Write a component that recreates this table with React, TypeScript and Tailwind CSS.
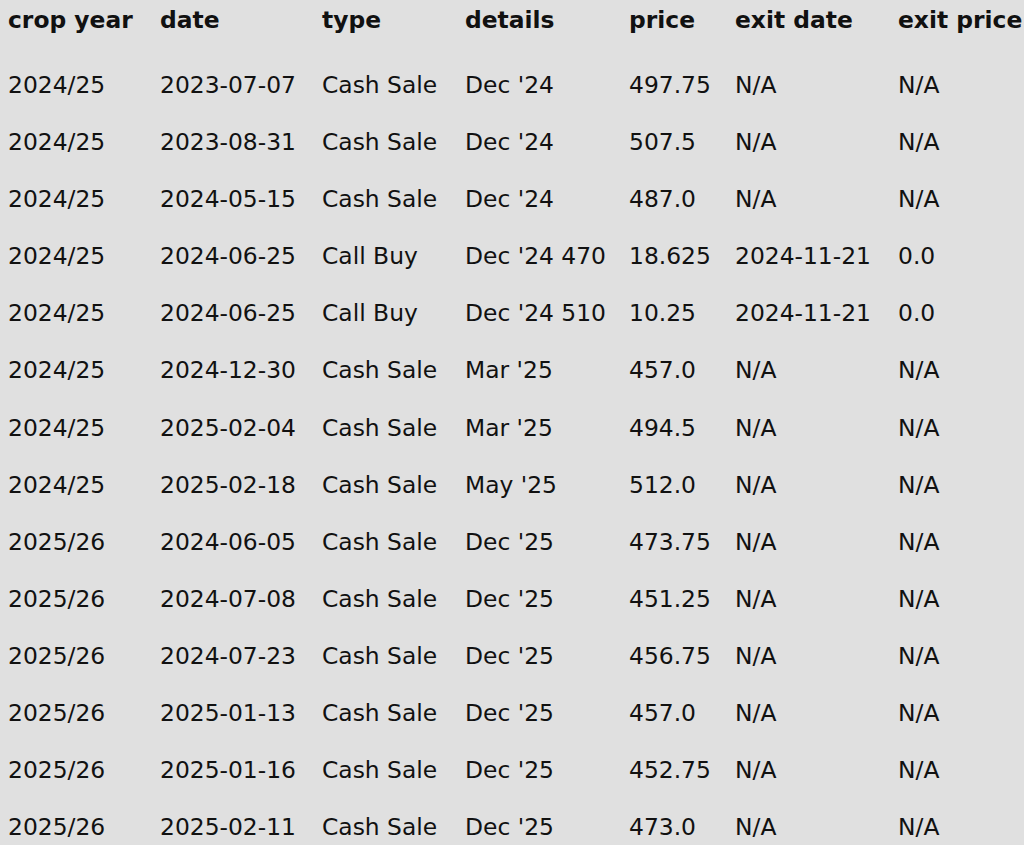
import React from "react";

type Trade = {
  cropYear: string;
  date: string;
  type: string;
  details: string;
  price: string;
  exitDate: string;
  exitPrice: string;
};

const trades: Trade[] = [
  { cropYear: "2024/25", date: "2023-07-07", type: "Cash Sale", details: "Dec '24", price: "497.75", exitDate: "N/A", exitPrice: "N/A" },
  { cropYear: "2024/25", date: "2023-08-31", type: "Cash Sale", details: "Dec '24", price: "507.5", exitDate: "N/A", exitPrice: "N/A" },
  { cropYear: "2024/25", date: "2024-05-15", type: "Cash Sale", details: "Dec '24", price: "487.0", exitDate: "N/A", exitPrice: "N/A" },
  { cropYear: "2024/25", date: "2024-06-25", type: "Call Buy", details: "Dec '24 470", price: "18.625", exitDate: "2024-11-21", exitPrice: "0.0" },
  { cropYear: "2024/25", date: "2024-06-25", type: "Call Buy", details: "Dec '24 510", price: "10.25", exitDate: "2024-11-21", exitPrice: "0.0" },
  { cropYear: "2024/25", date: "2024-12-30", type: "Cash Sale", details: "Mar '25", price: "457.0", exitDate: "N/A", exitPrice: "N/A" },
  { cropYear: "2024/25", date: "2025-02-04", type: "Cash Sale", details: "Mar '25", price: "494.5", exitDate: "N/A", exitPrice: "N/A" },
  { cropYear: "2024/25", date: "2025-02-18", type: "Cash Sale", details: "May '25", price: "512.0", exitDate: "N/A", exitPrice: "N/A" },
  { cropYear: "2025/26", date: "2024-06-05", type: "Cash Sale", details: "Dec '25", price: "473.75", exitDate: "N/A", exitPrice: "N/A" },
  { cropYear: "2025/26", date: "2024-07-08", type: "Cash Sale", details: "Dec '25", price: "451.25", exitDate: "N/A", exitPrice: "N/A" },
  { cropYear: "2025/26", date: "2024-07-23", type: "Cash Sale", details: "Dec '25", price: "456.75", exitDate: "N/A", exitPrice: "N/A" },
  { cropYear: "2025/26", date: "2025-01-13", type: "Cash Sale", details: "Dec '25", price: "457.0", exitDate: "N/A", exitPrice: "N/A" },
  { cropYear: "2025/26", date: "2025-01-16", type: "Cash Sale", details: "Dec '25", price: "452.75", exitDate: "N/A", exitPrice: "N/A" },
  { cropYear: "2025/26", date: "2025-02-11", type: "Cash Sale", details: "Dec '25", price: "473.0", exitDate: "N/A", exitPrice: "N/A" },
];

const Row: React.FC<{ cells: string[]; head?: boolean }> = ({ cells, head }) => (
  <div className={`flex items-center whitespace-nowrap ${head ? "h-[42px] font-bold" : "h-[57.1px]"}`}>
    <div className="w-[152px] shrink-0">{cells[0]}</div>
    <div className="w-[162px] shrink-0">{cells[1]}</div>
    <div className="w-[143px] shrink-0">{cells[2]}</div>
    <div className="w-[164px] shrink-0">{cells[3]}</div>
    <div className="w-[106px] shrink-0">{cells[4]}</div>
    <div className="w-[163px] shrink-0">{cells[5]}</div>
    <div className="shrink-0">{cells[6]}</div>
  </div>
);

export default function App() {
  return (
    <div className="h-screen w-screen overflow-hidden bg-[#e0e0e0] text-[#111] text-[23.4px] font-['DejaVu_Sans',sans-serif]">
      <div className="pl-2">
        <Row head cells={["crop year", "date", "type", "details", "price", "exit date", "exit price"]} />
        <div className="mt-[15px]">
          {trades.map((t, i) => (
            <Row key={i} cells={[t.cropYear, t.date, t.type, t.details, t.price, t.exitDate, t.exitPrice]} />
          ))}
        </div>
      </div>
    </div>
  );
}
